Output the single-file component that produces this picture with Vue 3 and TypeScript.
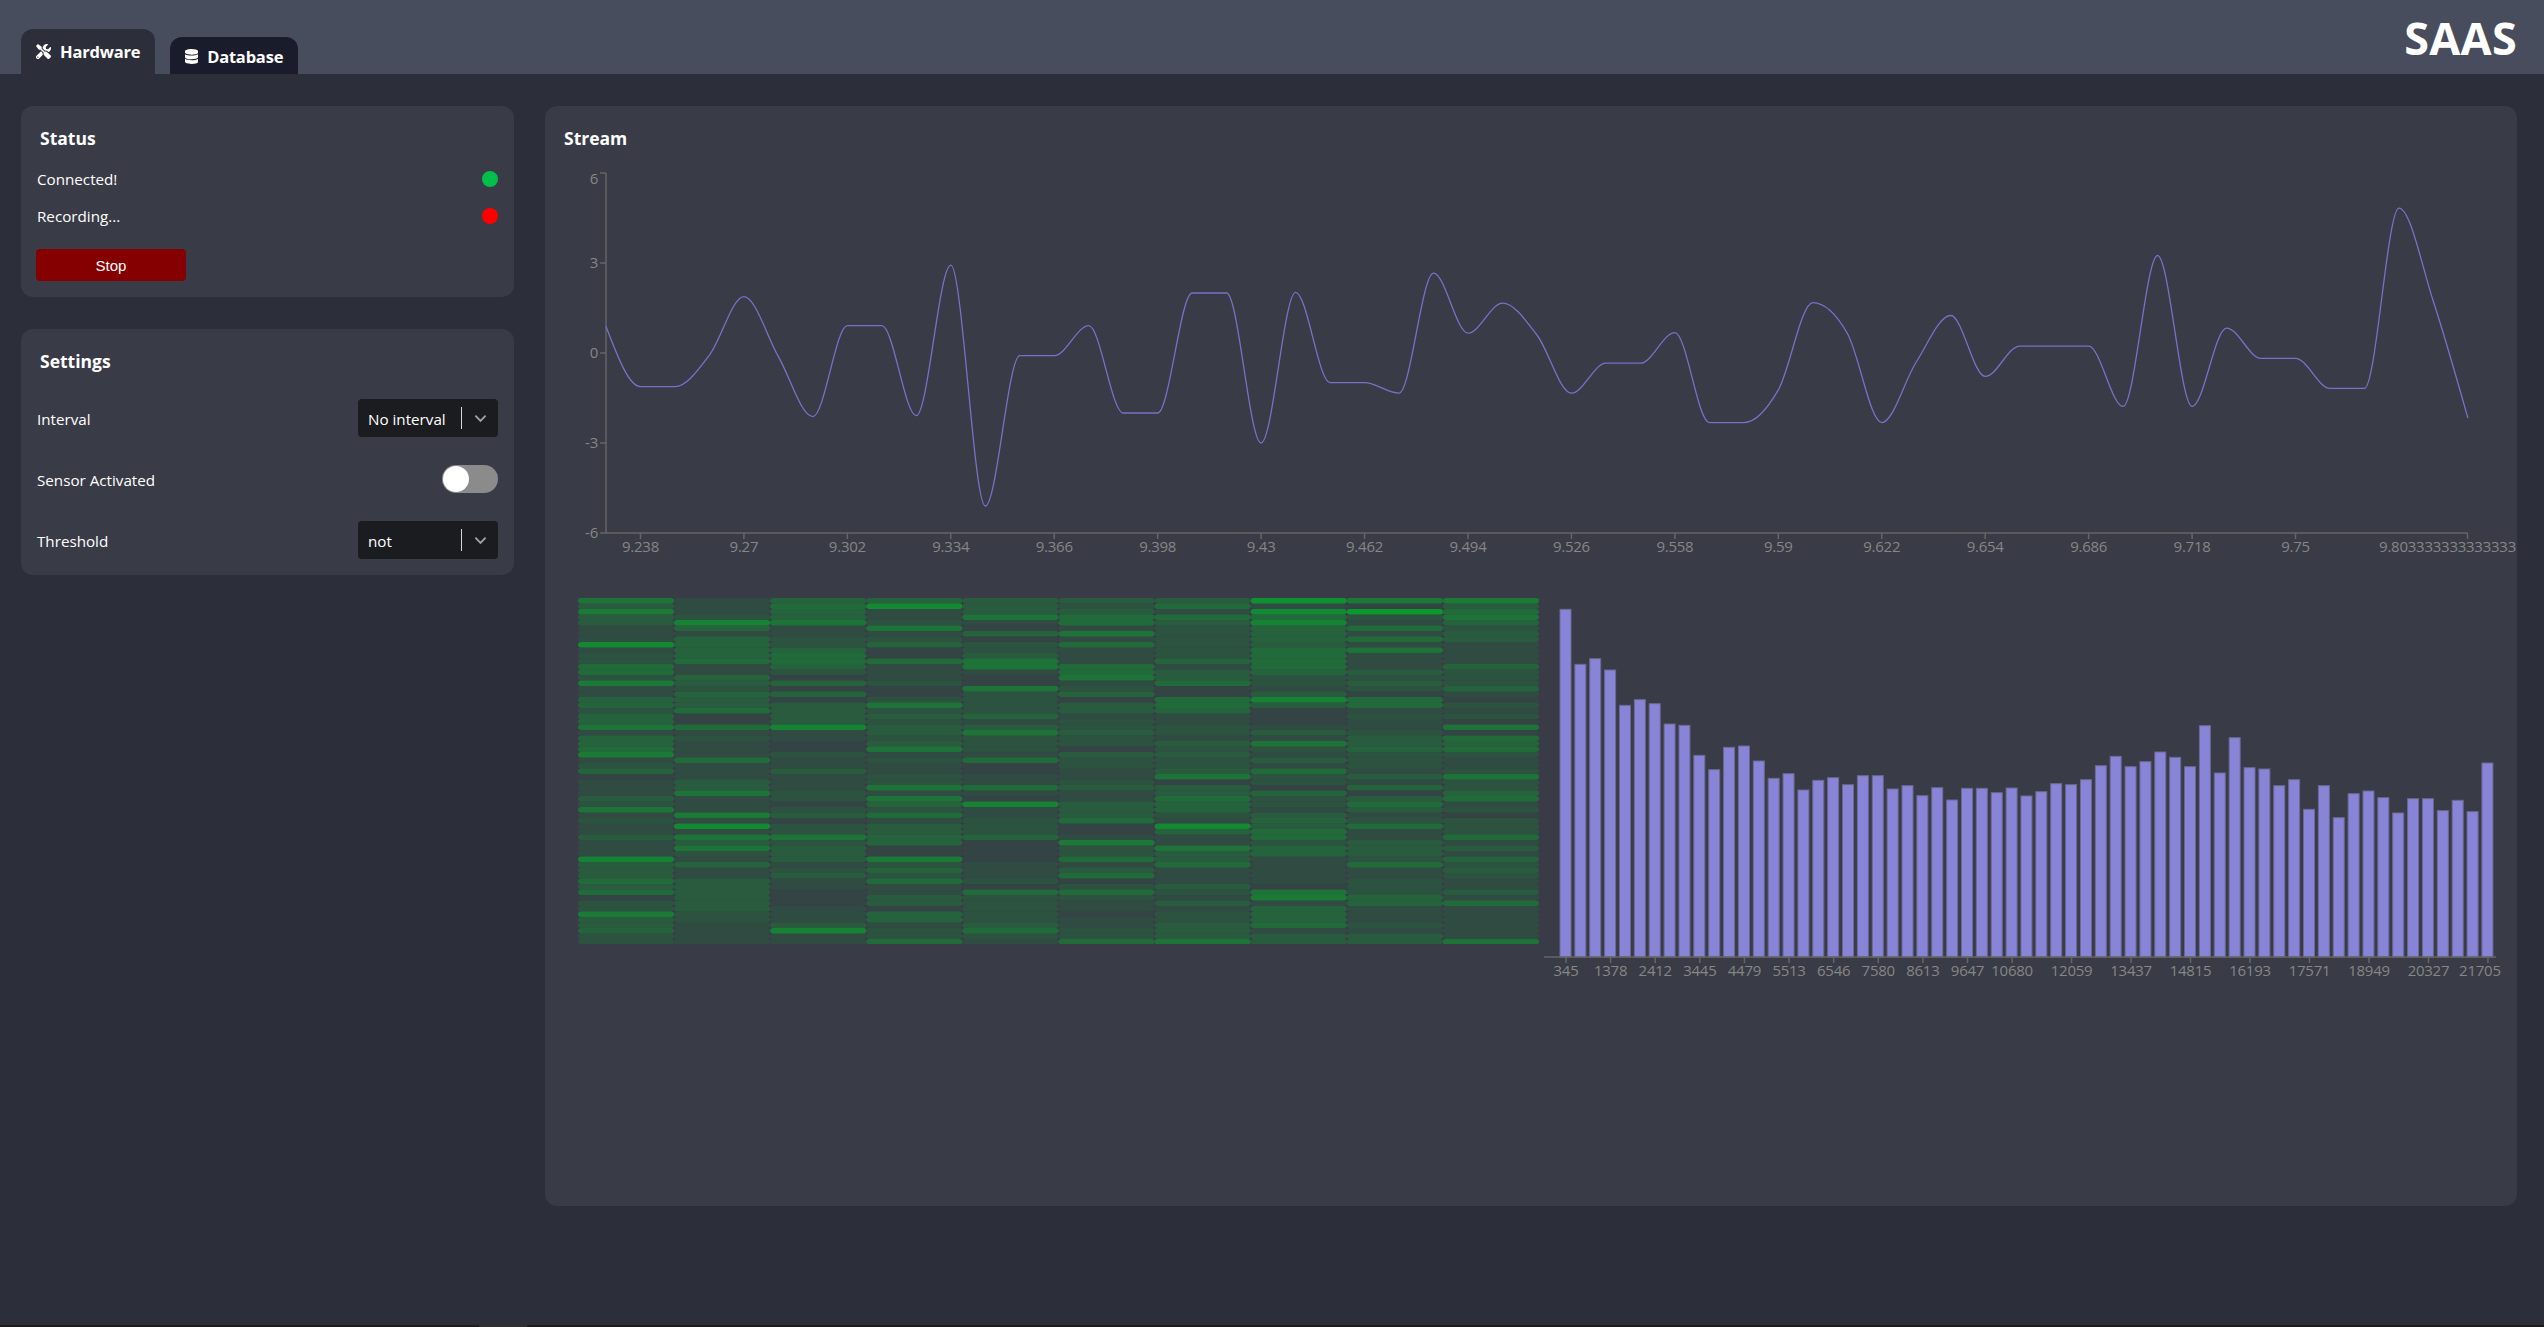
<template>
  <div class="page">
    <!-- HEADER -->
    <header class="top-bar">
      <nav class="tabs">
        <div class="tab tab-active">
          <svg class="tab-icon" viewBox="0 0 512 512"><path d="M501.1 395.7L384 278.6c-23.1-23.1-57.6-27.6-85.4-13.9L192 158.1V96L64 0 0 64l96 128h62.1l106.6 106.6c-13.6 27.8-9.2 62.3 13.9 85.4l117.1 117.1c14.6 14.6 38.2 14.6 52.7 0l52.7-52.7c14.5-14.6 14.5-38.2 0-52.7zM331.7 225c28.3 0 54.9 11 74.9 31l19.4 19.4c15.8-6.9 30.8-16.5 43.8-29.5 37.1-37.1 49.7-89.3 37.9-136.7-2.2-9-13.5-12.1-20.1-5.5l-74.4 74.4-67.9-11.3L334 98.9l74.4-74.4c6.6-6.6 3.4-17.9-5.7-20.2-47.4-11.7-99.6.9-136.6 37.9-28.5 28.5-41.9 66.1-41.2 103.6l82.1 82.1c8.1-1.9 16.5-2.9 24.7-2.9zm-103.9 82l-56.7-56.7L18.7 402.8c-25 25-25 65.5 0 90.5s65.5 25 90.5 0l123.6-123.6c-7.6-19.9-9.9-41.6-5-62.7zM64 472c-13.2 0-24-10.8-24-24 0-13.3 10.7-24 24-24s24 10.7 24 24c0 13.2-10.7 24-24 24z" /></svg>
          <span>Hardware</span>
        </div>
        <div class="tab tab-idle">
          <svg class="tab-icon" viewBox="0 0 448 512"><path d="M448 73.143v45.714C448 159.143 347.667 192 224 192S0 159.143 0 118.857V73.143C0 32.857 100.333 0 224 0s224 32.857 224 73.143zM448 176v102.857C448 319.143 347.667 352 224 352S0 319.143 0 278.857V176c48.125 33.143 136.208 48.572 224 48.572S399.874 209.143 448 176zm0 160v102.857C448 479.143 347.667 512 224 512S0 479.143 0 438.857V336c48.125 33.143 136.208 48.572 224 48.572S399.874 369.143 448 336z" /></svg>
          <span>Database</span>
        </div>
      </nav>
      <div class="brand">SAAS</div>
    </header>

    <main class="content">
      <!-- SIDEBAR -->
      <aside class="sidebar">
        <section class="card status-card">
          <h3 class="card-title">Status</h3>
          <div class="status-row">
            <span>Connected!</span>
            <i class="dot dot-green"></i>
          </div>
          <div class="status-row">
            <span>Recording...</span>
            <i class="dot dot-red"></i>
          </div>
          <button class="stop-button">Stop</button>
        </section>

        <section class="card settings-card">
          <h3 class="card-title">Settings</h3>
          <div class="setting-row">
            <span class="setting-label">Interval</span>
            <div class="select-box">
              <span class="select-value">No interval</span>
              <i class="select-sep"></i>
              <svg class="select-arrow" viewBox="0 0 14 9"><path d="M1.5 1.5L7 7l5.5-5.5" /></svg>
            </div>
          </div>
          <div class="setting-row">
            <span class="setting-label">Sensor Activated</span>
            <div class="toggle"><i class="toggle-knob"></i></div>
          </div>
          <div class="setting-row">
            <span class="setting-label">Threshold</span>
            <div class="select-box">
              <span class="select-value">not</span>
              <i class="select-sep"></i>
              <svg class="select-arrow" viewBox="0 0 14 9"><path d="M1.5 1.5L7 7l5.5-5.5" /></svg>
            </div>
          </div>
        </section>
      </aside>

      <!-- STREAM -->
      <section class="card stream-card">
        <h3 class="stream-title">Stream</h3>

        <svg class="line-chart" width="1953" height="400" viewBox="0 0 1953 400">
          <g class="axis">
            <line x1="42" y1="13" x2="42" y2="373" />
            <line x1="42" y1="373" x2="1903.5" y2="373" />
            <line v-for="t in yTicks" :key="t.label" x1="36" x2="42" :y1="t.y" :y2="t.y" />
            <line v-for="t in xTicks" :key="t.label" :x1="t.x" :x2="t.x" y1="373" y2="379" />
          </g>
          <text v-for="t in yTicks" :key="t.label" class="tick-label" x="34" :y="t.ly" text-anchor="end">{{ t.label }}</text>
          <text v-for="t in xTicks" :key="t.label" class="tick-label" :x="t.lx" y="392" :text-anchor="t.anchor">{{ t.label }}</text>
          <path class="stream-line" :d="streamPath" />
        </svg>

        <div class="charts-row">
          <svg class="heatmap" width="961" height="346" viewBox="0 0 961 346">
            <template v-for="(cells, c) in heatCells" :key="c">
              <rect
                v-for="(a, r) in cells"
                :key="r"
                :x="c * 96.1"
                :y="r * 5.5"
                width="96.1"
                height="5.5"
                rx="3"
                ry="2.75"
                fill="#00b028"
                :fill-opacity="a"
              />
            </template>
          </svg>

          <svg class="bar-chart" width="960" height="390" viewBox="0 0 960 390">
            <rect
              v-for="b in bars"
              :key="b.x"
              class="bar"
              :x="b.x"
              :y="b.y"
              width="11"
              :height="b.h"
            />
            <g class="axis">
              <line x1="0" y1="359" x2="952" y2="359" />
              <line v-for="t in barTicks" :key="t.label" :x1="t.x" :x2="t.x" y1="359" y2="365" />
            </g>
            <text v-for="t in barTicks" :key="t.label" class="tick-label" :x="t.lx" y="378" text-anchor="middle">{{ t.label }}</text>
          </svg>
        </div>
      </section>
    </main>

    <!-- BARRA INFERIOR -->
    <div class="bottom-strip"><i class="strip-thumb"></i></div>
  </div>
</template>

<script setup lang="ts">
// Stream values, one sample every 34.48px
const stream = [
  0.88, -1.12, -1.12, -0.07, 1.88, -0.12, -2.12, 0.91, 0.91, -2.09, 2.93, -5.1, -0.09, -0.09,
  0.91, -2, -2, 2, 2, -3, 2.02, -0.99, -0.99, -1.34, 2.66, 0.66, 1.66, 0.6, -1.34, -0.34, -0.34,
  0.68, -2.32, -2.32, -1.23, 1.68, 0.66, -2.32, -0.3, 1.25, -0.78, 0.23, 0.23, 0.23, -1.78, 3.25,
  -1.78, 0.83, -0.18, -0.18, -1.18, -1.18, 4.83, 1.71, -2.17,
]

const stepX = 34.48
const toX = (i: number) => 42 + i * stepX
const toY = (v: number) => 193 - v * 30

// Same curve as d3 curveMonotoneX
const monotonePath = (pts: [number, number][]) => {
  const n = pts.length
  const slopes: number[] = []
  for (let i = 0; i < n - 1; i++) {
    slopes.push((pts[i + 1][1] - pts[i][1]) / (pts[i + 1][0] - pts[i][0]))
  }
  const tangents = pts.map((_, i) => {
    if (i === 0 || i === n - 1) return 0
    const a = slopes[i - 1]
    const b = slopes[i]
    const limit = Math.min(Math.abs(a), Math.abs(b), 0.25 * Math.abs(a + b))
    return (Math.sign(a) + Math.sign(b)) * limit || 0
  })
  tangents[0] = (3 * slopes[0] - tangents[1]) / 2
  tangents[n - 1] = (3 * slopes[n - 2] - tangents[n - 2]) / 2
  let d = `M${pts[0][0]},${pts[0][1]}`
  for (let i = 0; i < n - 1; i++) {
    const h = (pts[i + 1][0] - pts[i][0]) / 3
    d += `C${pts[i][0] + h},${pts[i][1] + h * tangents[i]} ${pts[i + 1][0] - h},${pts[i + 1][1] - h * tangents[i + 1]} ${pts[i + 1][0]},${pts[i + 1][1]}`
  }
  return d
}

const streamPath = monotonePath(stream.map((v, i) => [toX(i), toY(v)]))

const yTicks = [
  { label: '6', y: 13, ly: 24 },
  { label: '3', y: 103, ly: 108 },
  { label: '0', y: 193, ly: 198 },
  { label: '-3', y: 283, ly: 288 },
  { label: '-6', y: 373, ly: 378 },
]

const xLabels = [
  '9.238', '9.27', '9.302', '9.334', '9.366', '9.398', '9.43', '9.462', '9.494', '9.526',
  '9.558', '9.59', '9.622', '9.654', '9.686', '9.718', '9.75',
]
const xTicks = xLabels.map((label, i) => {
  const x = toX(1 + i * 3)
  return { label, x, lx: x, anchor: 'middle' }
})
// The last label is pushed back so it ends on the chart's right edge
xTicks.push({ label: '9.803333333333333', x: 1903.5, lx: 1952, anchor: 'end' })

// Heatmap: one string per column, one base-12 digit per row
const heatColumns = [
  '637331119122552711442446144571240111326121131118333535022733422',
  '111284144445114324335005121115111336111719163621411333333221111',
  '454461122455420404033338110021131112202302262333123110001113811',
  '491126124005111200262323323612112261642513344007242511330441225',
  '333610402236610062222413622215001151081122240000111205222223521',
  '323551615111556124033122322032211231133350017225135025211011225',
  '351532222224133500554112213232236033544219411633511132131223336',
  'a19584443555542213830001316213152204221343552441111106714445133',
  '70b215151611132320551211233422213140353125113332511222441112133',
  '735642331111422241021206054521126224512022251314232113151111116',
]
const heatCells = heatColumns.map((col) =>
  col.split('').map((ch) => +(0.08 + parseInt(ch, 12) * 0.066).toFixed(3)),
)

// Spectrum: top of each bar as read on the chart, baseline at 359
const barTops = [
  57, 222, 205, 239, 345, 328, 340, 401, 405, 495, 538, 471, 467, 512, 564, 550, 599, 570, 562,
  583, 556, 556, 596, 586, 616, 592, 629, 594, 594, 607, 593, 617, 604, 580, 583, 568, 526, 498,
  529, 514, 485, 501, 529, 406, 548, 442, 532, 536, 586, 568, 657, 586, 682, 610, 602, 622, 668,
  625, 625, 661, 630, 664, 518,
]
const barStep = 14.87
const bars = barTops.map((top, i) => {
  const h = (1100 - top) / 3
  return { x: +(16 + i * barStep).toFixed(2), y: +(359 - h).toFixed(2), h: +h.toFixed(2) }
})

const barLabels: [number, string][] = [
  [0, '345'], [3, '1378'], [6, '2412'], [9, '3445'], [12, '4479'], [15, '5513'], [18, '6546'],
  [21, '7580'], [24, '8613'], [27, '9647'], [30, '10680'], [34, '12059'], [38, '13437'],
  [42, '14815'], [46, '16193'], [50, '17571'], [54, '18949'], [58, '20327'], [62, '21705'],
]
const barTicks = barLabels.map(([i, label]) => {
  const x = 22 + i * barStep
  return { label, x, lx: i === 62 ? x - 8 : x }
})
</script>

<style scoped>
.page {
  display: flex;
  flex-direction: column;
  height: 1327px;
  background: #2c2e3a;
  color: #fff;
  font-family: "Open Sans", "Noto Sans", sans-serif;
  overflow: hidden;
}

/* HEADER */
.top-bar {
  display: flex;
  justify-content: space-between;
  height: 74px;
  padding: 0 27px 0 21px;
  box-sizing: border-box;
  background: #474d5d;
}

.tabs {
  display: flex;
  align-items: flex-end;
  gap: 15px;
}

.tab {
  display: flex;
  align-items: center;
  gap: 9px;
  box-sizing: border-box;
  font-size: 16.5px;
  font-weight: 700;
  letter-spacing: -0.2px;
  border-radius: 12px 12px 0 0;
}

.tab-active {
  width: 134px;
  height: 45px;
  padding: 0 0 1px 15px;
  background: #2c2e3a;
}

.tab-idle {
  width: 128px;
  height: 37px;
  padding: 2px 0 0 15px;
  background: #1a1c2b;
}

.tab-icon {
  height: 15px;
  fill: #fff;
}

.brand {
  padding-top: 8px;
  font-size: 45px;
  font-weight: 700;
  line-height: 60px;
  letter-spacing: 0.3px;
}

/* CONTENIDO */
.content {
  display: flex;
  flex: 1;
  align-items: flex-start;
  gap: 31px;
  padding: 32px 27px 0 21px;
  min-height: 0;
}

.sidebar {
  display: flex;
  flex-direction: column;
  gap: 32px;
  width: 493px;
  flex: none;
}

.card {
  background: #393b47;
  border-radius: 12px;
  box-sizing: border-box;
}

.card-title {
  margin: 0 0 0 3px;
  font-size: 17.5px;
  font-weight: 700;
  line-height: 24px;
}

/* STATUS */
.status-card {
  height: 191px;
  padding: 20px 16px 15px;
}

.status-row {
  display: flex;
  justify-content: space-between;
  align-items: center;
  height: 37px;
  font-size: 15.2px;
}

.status-card .card-title {
  margin-bottom: 10px;
}

.dot {
  width: 16px;
  height: 16px;
  border-radius: 50%;
}

.dot-green {
  background: #00c04b;
}

.dot-red {
  background: #ff0000;
}

.stop-button {
  display: block;
  width: 150px;
  height: 32px;
  margin: 15px 0 0 -1px;
  border: none;
  border-radius: 4px;
  background: #850000;
  color: #fff;
  font-family: "Liberation Sans", Arial, sans-serif;
  font-size: 15px;
}

/* SETTINGS */
.settings-card {
  height: 246px;
  padding: 20px 16px 16px;
}

.settings-card .card-title {
  margin-bottom: 26px;
}

.setting-row {
  display: flex;
  justify-content: space-between;
  align-items: center;
  height: 38px;
  margin-bottom: 23px;
  font-size: 15.2px;
}

.setting-row:last-child {
  margin-bottom: 0;
}

.setting-label {
  padding-top: 2px;
}

.select-box {
  display: flex;
  align-items: center;
  width: 140px;
  height: 38px;
  padding-left: 10px;
  box-sizing: border-box;
  border-radius: 4px;
  background: #1b1c1f;
}

.select-value {
  width: 93px;
  padding-top: 1px;
  font-size: 15.2px;
}

.select-sep {
  width: 1px;
  height: 22px;
  background: #d8d8d8;
}

.select-arrow {
  width: 13px;
  height: 9px;
  margin-left: 12px;
  fill: none;
  stroke: #a3a3a3;
  stroke-width: 2;
}

.toggle {
  display: flex;
  align-items: center;
  width: 56px;
  height: 28px;
  padding-left: 1px;
  box-sizing: border-box;
  border-radius: 14px;
  background: #8b8b8b;
}

.toggle-knob {
  width: 26px;
  height: 26px;
  border-radius: 50%;
  background: #fff;
}

/* STREAM */
.stream-card {
  flex: 1;
  height: 1100px;
  padding: 20px 0 0 19px;
  overflow: hidden;
}

.stream-title {
  height: 34px;
  margin: 0;
  font-size: 17.5px;
  font-weight: 700;
  line-height: 24px;
}

.line-chart {
  display: block;
}

.charts-row {
  display: flex;
  align-items: flex-start;
  gap: 5px;
  margin: 38px 0 0 14px;
}

.heatmap,
.bar-chart {
  display: block;
  flex: none;
}

.axis line {
  stroke: #666;
  stroke-width: 1.5;
}

.tick-label {
  fill: #868686;
  font-size: 15px;
  letter-spacing: -0.25px;
}

.stream-line {
  fill: none;
  stroke: #7672c6;
  stroke-width: 1.3;
}

.bar {
  fill: #8884d8;
  stroke: #6a6a90;
  stroke-width: 1;
}

/* BARRA INFERIOR */
.bottom-strip {
  display: flex;
  height: 2px;
  padding-left: 479px;
  background: #1c1c1c;
}

.strip-thumb {
  width: 48px;
  background: #2f2f2f;
}
</style>

<style>
html,
body {
  margin: 0;
  background: #2c2e3a;
}
</style>
